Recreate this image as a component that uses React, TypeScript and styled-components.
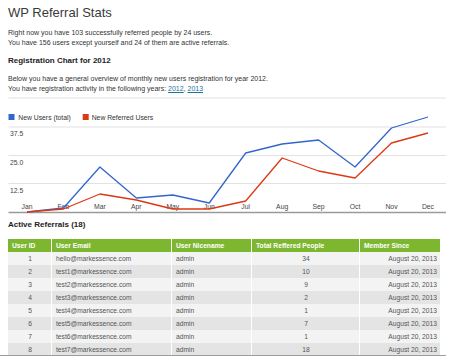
import React from "react";
import styled, { createGlobalStyle } from "styled-components";

const GlobalStyle = createGlobalStyle`
  html, body { margin: 0; padding: 0; background: #fff; }
  body { font-family: "Liberation Sans", Helvetica, Arial, sans-serif; color: #333; }
`;

const Page = styled.div`
  box-sizing: border-box;
  width: 446px;
  height: 356px;
  padding: 0 0 0 8px;
  overflow: hidden;
  border-bottom: 1.5px solid #9c9c9c;
`;

const Title = styled.h1`
  margin: 0;
  font-size: 13px;
  line-height: 26px;
  font-weight: normal;
  color: #3a3a3a;
`;

const Para = styled.p<{ $top: number }>`
  margin: ${(p) => p.$top}px 0 0;
  font-size: 7px;
  line-height: 10px;
  color: #333;
`;

const Link = styled.a`
  color: #21759b;
  text-decoration: underline;
`;

const SectionTitle = styled.h2<{ $top: number }>`
  margin: ${(p) => p.$top}px 0 0;
  font-size: 8px;
  line-height: 12px;
  font-weight: bold;
  color: #222;
`;

const ChartSvg = styled.svg`
  display: block;
  width: 440px;
  height: 122px;
  font-family: "Liberation Sans", Helvetica, Arial, sans-serif;
`;

const Table = styled.table`
  margin: 8px 0 0 -1px;
  width: 434px;
  table-layout: fixed;
  border-collapse: separate;
  border-spacing: 1px 0;
  font-size: 6.7px;
`;

const HeadCell = styled.th`
  height: 12.5px;
  padding: 0 3px 0 4px;
  background: #7db72f;
  color: #fff;
  font-weight: bold;
  text-align: left;
  white-space: nowrap;
`;

const Row = styled.tr<{ $alt: boolean }>`
  background: ${(p) => (p.$alt ? "#e4e4e4" : "#f3f3f3")};
`;

const Cell = styled.td<{ $align?: "left" | "center" | "right" }>`
  height: 13px;
  padding: 0 3px 0 4px;
  color: #555;
  text-align: ${(p) => p.$align || "left"};
  white-space: nowrap;
`;

const months = ["Jan", "Feb", "Mar", "Apr", "May", "Jun", "Jul", "Aug", "Sep", "Oct", "Nov", "Dec"];
const xs = months.map((_, i) => 19 + i * 36.45);
const blue = [118, 114, 73, 104, 101, 109, 59, 50, 46, 73, 34, 23];
const red = [118, 115, 100, 106, 115, 115, 107, 64, 77, 84, 49, 39];

const pts = (ys: number[]) => ys.map((y, i) => `${xs[i].toFixed(2)},${y}`).join(" ");

const Chart = () => (
  <ChartSvg viewBox="0 0 440 122">
    {[4, 33, 61.5, 89.5].map((y) => (
      <line key={y} x1={0.5} x2={438} y1={y} y2={y} stroke="#e2e2e2" strokeWidth={1.2} />
    ))}
    <rect x={0.5} y={20} width={6} height={6} fill="#3366cc" />
    <text x={10.3} y={25.7} fontSize={6.8} fill="#333">New Users (total)</text>
    <rect x={74.7} y={20} width={6} height={6} fill="#dc3912" />
    <text x={83.7} y={25.7} fontSize={6.8} fill="#333">New Referred Users</text>
    <text x={2} y={42} fontSize={6.8} fill="#444">37.5</text>
    <text x={2} y={70.5} fontSize={6.8} fill="#444">25.0</text>
    <text x={2} y={98.5} fontSize={6.8} fill="#444">12.5</text>
    {months.map((m, i) => (
      <text key={m} x={xs[i]} y={114.5} fontSize={6.8} fill="#444" textAnchor="middle">{m}</text>
    ))}
    <line x1={0.5} x2={438} y1={118.5} y2={118.5} stroke="#9a9a9a" strokeWidth={1.6} />
    <polyline points={pts(blue)} fill="none" stroke="#3366cc" strokeWidth={1.3} strokeLinejoin="round" />
    <polyline points={pts(red)} fill="none" stroke="#dc3912" strokeWidth={1.3} strokeLinejoin="round" />
  </ChartSvg>
);

const rows = [
  [1, "hello@markessence.com", 34],
  [2, "test1@markessence.com", 10],
  [3, "test2@markessence.com", 9],
  [4, "test3@markessence.com", 2],
  [5, "test4@markessence.com", 1],
  [6, "test5@markessence.com", 7],
  [7, "test6@markessence.com", 1],
  [8, "test7@markessence.com", 18],
] as const;

export default function App() {
  return (
    <>
      <GlobalStyle />
      <Page>
        <Title>WP Referral Stats</Title>
        <Para $top={2}>
          Right now you have 103 successfully referred people by 24 users.
          <br />
          You have 156 users except yourself and 24 of them are active referrals.
        </Para>
        <SectionTitle $top={7}>Registration Chart for 2012</SectionTitle>
        <Para $top={7}>
          Below you have a general overview of monthly new users registration for year 2012.
          <br />
          You have registration activity in the following years: <Link href="#">2012</Link>, <Link href="#">2013</Link>
        </Para>
        <Chart />
        <SectionTitle $top={3}>Active Referrals (18)</SectionTitle>
        <Table>
          <colgroup>
            <col style={{ width: 43 }} />
            <col style={{ width: 119 }} />
            <col style={{ width: 79 }} />
            <col style={{ width: 107 }} />
            <col style={{ width: 80 }} />
          </colgroup>
          <thead>
            <tr>
              <HeadCell>User ID</HeadCell>
              <HeadCell>User Email</HeadCell>
              <HeadCell>User Nicename</HeadCell>
              <HeadCell>Total Reffered People</HeadCell>
              <HeadCell>Member Since</HeadCell>
            </tr>
          </thead>
          <tbody>
            {rows.map(([id, email, total], i) => (
              <Row key={id} $alt={i % 2 === 1}>
                <Cell $align="center">{id}</Cell>
                <Cell>{email}</Cell>
                <Cell>admin</Cell>
                <Cell $align="center">{total}</Cell>
                <Cell $align="right">August 20, 2013</Cell>
              </Row>
            ))}
          </tbody>
        </Table>
      </Page>
    </>
  );
}
